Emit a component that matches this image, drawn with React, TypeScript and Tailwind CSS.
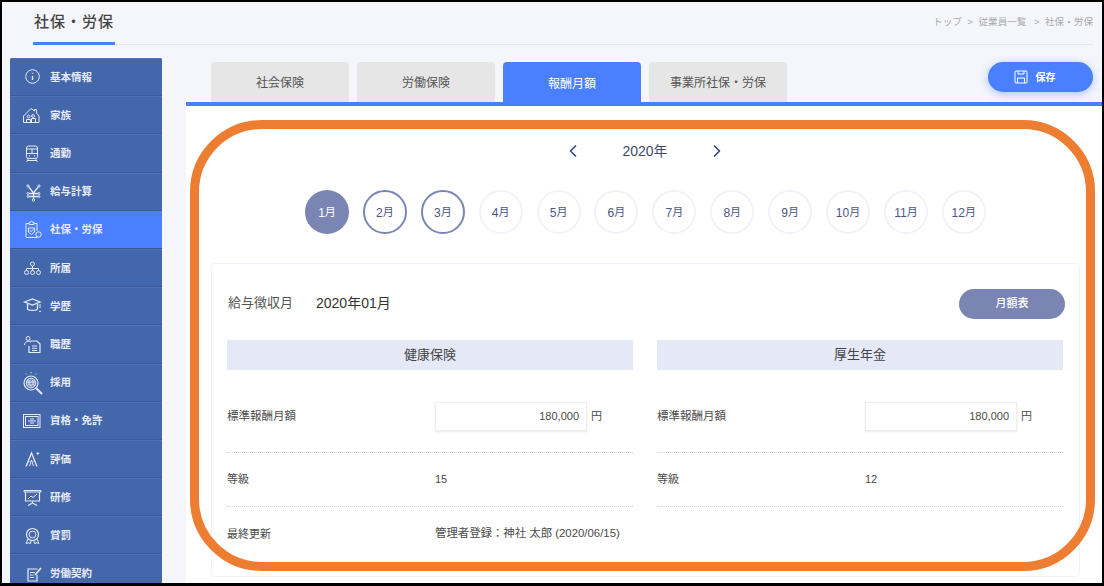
import React from "react";
import { ChevronLeft, ChevronRight } from "lucide-react";

// サイドバーのアイコンは 20x20 で手描き
const icons: Record<string, React.ReactNode> = {
  info: (
    <>
      <circle cx="10.5" cy="9.5" r="6.8" />
      <path d="M10.5 9v4" strokeWidth="1.4" />
      <path d="M10.5 5.8v1" strokeWidth="1.4" />
    </>
  ),
  house: (
    <>
      <path d="M1.5 17.5V11L9 3.5 12.5 6V4.5h2V8L17 11v6.5z" />
      <circle cx="6.5" cy="11.5" r="1.4" />
      <circle cx="11" cy="11" r="1.4" />
      <path d="M4.5 17.5v-3h4v3M9.5 17.5v-4h4v4" />
    </>
  ),
  train: (
    <>
      <rect x="4.5" y="3" width="11" height="12.5" rx="2" />
      <path d="M4.5 6h11M4.5 10.5h11M10 6v4.5" />
      <path d="M7 13h.8M12.2 13h.8" strokeWidth="1.4" />
      <path d="M6.5 15.5 4.5 19M13.5 15.5l2 3.5M5 17.5h10" />
    </>
  ),
  yen: (
    <>
      <circle cx="6" cy="4" r="1.1" />
      <circle cx="17" cy="4" r="1.1" />
      <circle cx="11.5" cy="18" r="1.2" />
      <path d="M6.8 5l4.7 6 4.7-6M11.5 11v5.8M7 11.5h9M7 14.5h9" strokeWidth="1.3" />
      <circle cx="6" cy="11.5" r=".9" />
      <circle cx="17" cy="11.5" r=".9" />
      <circle cx="6" cy="14.5" r=".9" />
      <circle cx="17" cy="14.5" r=".9" />
    </>
  ),
  clipboard: (
    <>
      <path d="M7 4.5H4v14h11v-1M15 12V4.5h-3" />
      <path d="M7 5.5V3.5h1.2a1.3 1.3 0 0 1 2.6 0H12v2z" />
      <path d="M6.5 9h6v4l-3 2.5-3-2.5z" />
      <path d="M8 11.5l1.2 1.2L11 10.5" />
      <circle cx="16.5" cy="15.5" r="2.7" />
    </>
  ),
  org: (
    <>
      <circle cx="10.5" cy="6" r="2" />
      <circle cx="4.5" cy="14.5" r="2" />
      <circle cx="10.5" cy="14.5" r="2" />
      <circle cx="16.5" cy="14.5" r="2" />
      <path d="M10.5 8v4.5M4.5 12.5v-2h12v2" />
    </>
  ),
  graduate: (
    <>
      <path d="M2.5 6 10.5 3 18 6l-7.5 3z" strokeWidth="1.3" />
      <path d="M5.5 8v4.5c0 2.5 10 2.5 10 0V8" strokeWidth="1.3" />
      <path d="M18 8v4" />
      <path d="M18 15v1" strokeWidth="1.8" />
    </>
  ),
  job: (
    <>
      <circle cx="6" cy="4.5" r="2" />
      <path d="M2.5 11c0-4 5-4.500 6.500-2.500" />
      <path d="M8 7h7l3 3v8.500H7V12" strokeWidth="1.2" />
      <path d="M10 12h5M10 14.300h5M10 16.500h5" />
    </>
  ),
  recruit: (
    <>
      <circle cx="9" cy="10" r="7" strokeWidth="1.2" />
      <circle cx="9" cy="10" r="4.800" fill="currentColor" fillOpacity=".35" />
      <circle cx="7" cy="9" r="1.200" />
      <circle cx="11" cy="9" r="1.200" />
      <path d="M5.500 13c0-2 3.500-2 3.500 0 0-2 3.500-2 3.500 0" />
      <path d="M14 15l6 6" strokeWidth="2" />
      <path d="M9-1v1.200M3.800.5l.6 1M14.200.5l-.6 1" />
    </>
  ),
  license: (
    <>
      <rect x="1.500" y="3.500" width="16.500" height="13" />
      <rect x="3.500" y="5.500" width="12.500" height="9" />
      <path d="M6 10h8M8 8h4M8 12h4" />
    </>
  ),
  evaluation: (
    <>
      <path d="M4 17.500 9.500 4 15 17.500" strokeWidth="1.300" />
      <path d="M7.500 17 9.500 11l2 6M6.500 12.500h1M11.500 12.500h1" />
      <path d="M15.500 4.500h.6" strokeWidth="2.200" strokeLinecap="round" />
    </>
  ),
  training: (
    <>
      <path d="M2 3.500h17V5H2z" />
      <path d="M3.500 5v9h14V5" strokeWidth="1.200" />
      <path d="M6 12l3-3 2 1.500L15 7" />
      <path d="M10.500 14v2M6 18.500l4.500-2.500 4.500 2.500" strokeWidth="1.200" />
    </>
  ),
  award: (
    <>
      <circle cx="10.500" cy="9.500" r="6" strokeWidth="1.200" />
      <circle cx="10.500" cy="9.500" r="3.400" />
      <path d="M6 14l-2 4.500 3-1 1 1.500 1.500-3.500M15 14l2 4.500-3-1-1 1.500-1.500-3.500" />
    </>
  ),
  contract: (
    <>
      <path d="M15.500 5H6v12h9v-6" strokeWidth="1.200" />
      <path d="M8 8.500h5M8 11h3.500M8 13.500h4" />
      <path d="M13 11l6-7" strokeWidth="1.700" />
    </>
  ),
};

const menuItems = [
  { name: "基本情報", icon: "info" },
  { name: "家族", icon: "house" },
  { name: "通勤", icon: "train" },
  { name: "給与計算", icon: "yen" },
  { name: "社保・労保", icon: "clipboard", active: true },
  { name: "所属", icon: "org" },
  { name: "学歴", icon: "graduate" },
  { name: "職歴", icon: "job" },
  { name: "採用", icon: "recruit" },
  { name: "資格・免許", icon: "license" },
  { name: "評価", icon: "evaluation" },
  { name: "研修", icon: "training" },
  { name: "賞罰", icon: "award" },
  { name: "労働契約", icon: "contract" },
];

const tabs = ["社会保険", "労働保険", "報酬月額", "事業所社保・労保"];
const months = [1, 2, 3, 4, 5, 6, 7, 8, 9, 10, 11, 12];

const Row = ({ label, children, first }: { label: string; children?: React.ReactNode; first?: boolean }) => (
  <div className={`flex items-center border-b border-dotted border-[#d2d2d2] ${first ? "h-[83px] pt-[11px]" : "h-[54px]"}`}>
    <div className={`w-[208px] text-[#4a4a4a] ${first ? "text-[11.5px]" : "text-[11px]"}`}>{label}</div>
    <div className="flex items-center text-[11px] text-[#4a4a4a]">{children}</div>
  </div>
);

const Amount = () => (
  <>
    <div className="flex h-[29px] w-[152px] items-center justify-end border border-[#eeeeee] bg-white pr-[7px] shadow-[0_1px_2px_rgba(0,0,0,0.08)]">180,000</div>
    <span className="ml-[4px]">円</span>
  </>
);

export default function App() {
  return (
    <div className="relative h-[586px] w-[1104px] overflow-hidden border-x-2 border-t-2 border-b-[3px] border-black bg-[#f5f6fb] font-['Liberation_Sans','Noto_Sans_CJK_JP',sans-serif]">
      {/* ヘッダー */}
      <header className="ml-[31px] mr-[9px] flex h-[43px] items-center justify-between border-b border-[#e6e7ec]">
        <div className="-mb-px flex h-[43px] w-[82px] items-center border-b-[3px] border-[#4a80ff] pl-px pt-[1px] text-[15px] font-medium tracking-[1px] text-[#444444]">
          社保・労保
        </div>
        <div className="mb-[2px] flex gap-[5.5px] text-[9.6px] text-[#aaaaaa]">
          <span>トップ</span>
          <span>&gt;</span>
          <span>従業員一覧</span>
          <span className="ml-[2px]">&gt;</span>
          <span>社保・労保</span>
        </div>
      </header>

      <div className="flex h-[539px] pl-[8px] pt-[13px]">
        {/* サイドバー */}
        <aside className="h-[526px] w-[152px] shrink-0 overflow-hidden rounded-t-[2px] bg-[#4466ab]">
          {menuItems.map((item) => (
            <div
              key={item.name}
              className={`flex h-[38.2px] items-center border-b border-[#3a5998] pl-[12px] text-[#e6ebf7] ${item.active ? "bg-[#4a80ff]" : "border-t border-t-[#5272b5]"}`}
            >
              <svg viewBox="0 0 20 20" fill="none" stroke="currentColor" strokeWidth="1" className="h-[20px] w-[20px] shrink-0 overflow-visible">
                {icons[item.icon]}
              </svg>
              <span className="ml-[8px] pt-px text-[10.5px] font-bold">{item.name}</span>
            </div>
          ))}
        </aside>

        <main className="ml-[24px] flex min-w-0 flex-1 flex-col">
          {/* タブ */}
          <div className="flex h-[44px] shrink-0 justify-between pl-[25px] pr-[9px] pt-[4px]">
            <div className="flex gap-[8px]">
              {tabs.map((tab) => (
                <div
                  key={tab}
                  className={`flex w-[138px] items-center justify-center rounded-t-[4px] text-[12px] ${tab === "報酬月額" ? "h-[44px] bg-[#4a80ff] text-white" : "h-[40px] bg-[#e6e6e6] pt-[2px] text-[#555555]"}`}
                >
                  {tab}
                </div>
              ))}
            </div>
            <button className="flex h-[30px] w-[105px] items-center justify-center gap-[8px] rounded-full bg-[#4a80ff] pr-[12px] text-[10px] font-bold text-white shadow-[0_2px_8px_rgba(74,128,255,0.45)]">
              <svg viewBox="0 0 14 14" fill="none" stroke="currentColor" strokeWidth="1" className="h-[14px] w-[14px]">
                <rect x="1" y="1" width="12" height="12" rx="1" />
                <path d="M4 1v3h6V1M3.500 13V8h7v5" />
              </svg>
              保存
            </button>
          </div>

          <div className="flex min-h-0 flex-1 flex-col border-t-[4px] border-[#4a80ff] bg-white">
            {/* 年 */}
            <div className="mt-[34px] flex h-[22px] shrink-0 items-center justify-center gap-[26px] pl-[2px] text-[14px] text-[#3f4a6b]">
              <ChevronLeft className="h-[20px] w-[20px] text-[#34477f]" strokeWidth={2} />
              <span className="w-[72px] text-center">2020年</span>
              <ChevronRight className="h-[20px] w-[20px] text-[#34477f]" strokeWidth={2} />
            </div>

            {/* 月 */}
            <div className="ml-[119px] mt-[28px] flex shrink-0 gap-[13.9px]">
              {months.map((m) => (
                <div
                  key={m}
                  className={`flex h-[44px] w-[44px] items-center justify-center rounded-full pt-px text-[12px] ${m === 1 ? "bg-[#7a85b3] text-white" : m < 4 ? "border-2 border-[#7a85b3] text-[#4c5680]" : "border-2 border-[#f2f3fa] text-[#4c5680]"}`}
                >
                  {m}
                  <span className="text-[11px]">月</span>
                </div>
              ))}
            </div>

            {/* カード */}
            <div className="ml-[25px] mr-[22px] mt-[29px] h-[314px] shrink-0 rounded-[4px] border border-[#f0f1f8] pl-[15px] pr-[16px]">
              <div className="flex h-[76px] items-center justify-between pt-[2px]">
                <div className="flex items-center">
                  <span className="w-[89px] pl-px text-[13px] text-[#555555]">給与徴収月</span>
                  <span className="text-[14px] text-[#333333]">2020年01月</span>
                </div>
                <button className="mr-[-2px] mt-[1px] flex h-[30px] w-[106px] items-center justify-center rounded-full bg-[#7a85b3] text-[11px] font-medium text-white">
                  月額表
                </button>
              </div>

              <div className="grid grid-cols-2 gap-x-[24px]">
                <div>
                  <div className="flex h-[30px] items-center justify-center bg-[#e4e8f7] text-[13px] text-[#444444]">健康保険</div>
                  <Row label="標準報酬月額" first><Amount /></Row>
                  <Row label="等級">15</Row>
                  <div className="flex h-[54px] items-center text-[#4a4a4a]">
                    <div className="w-[208px] text-[11px]">最終更新</div>
                    <div className="text-[11.4px]">管理者登録：神社 太郎 (2020/06/15)</div>
                  </div>
                </div>
                <div>
                  <div className="flex h-[30px] items-center justify-center bg-[#e4e8f7] text-[13px] text-[#444444]">厚生年金</div>
                  <Row label="標準報酬月額" first><Amount /></Row>
                  <Row label="等級">12</Row>
                </div>
              </div>
            </div>
          </div>
        </main>
      </div>

      {/* オレンジの囲み */}
      <div className="pointer-events-none absolute left-[188px] top-[118px] h-[451px] w-[905px] rounded-[72px] border-[9px] border-[#ed7d31]" />
    </div>
  );
}
